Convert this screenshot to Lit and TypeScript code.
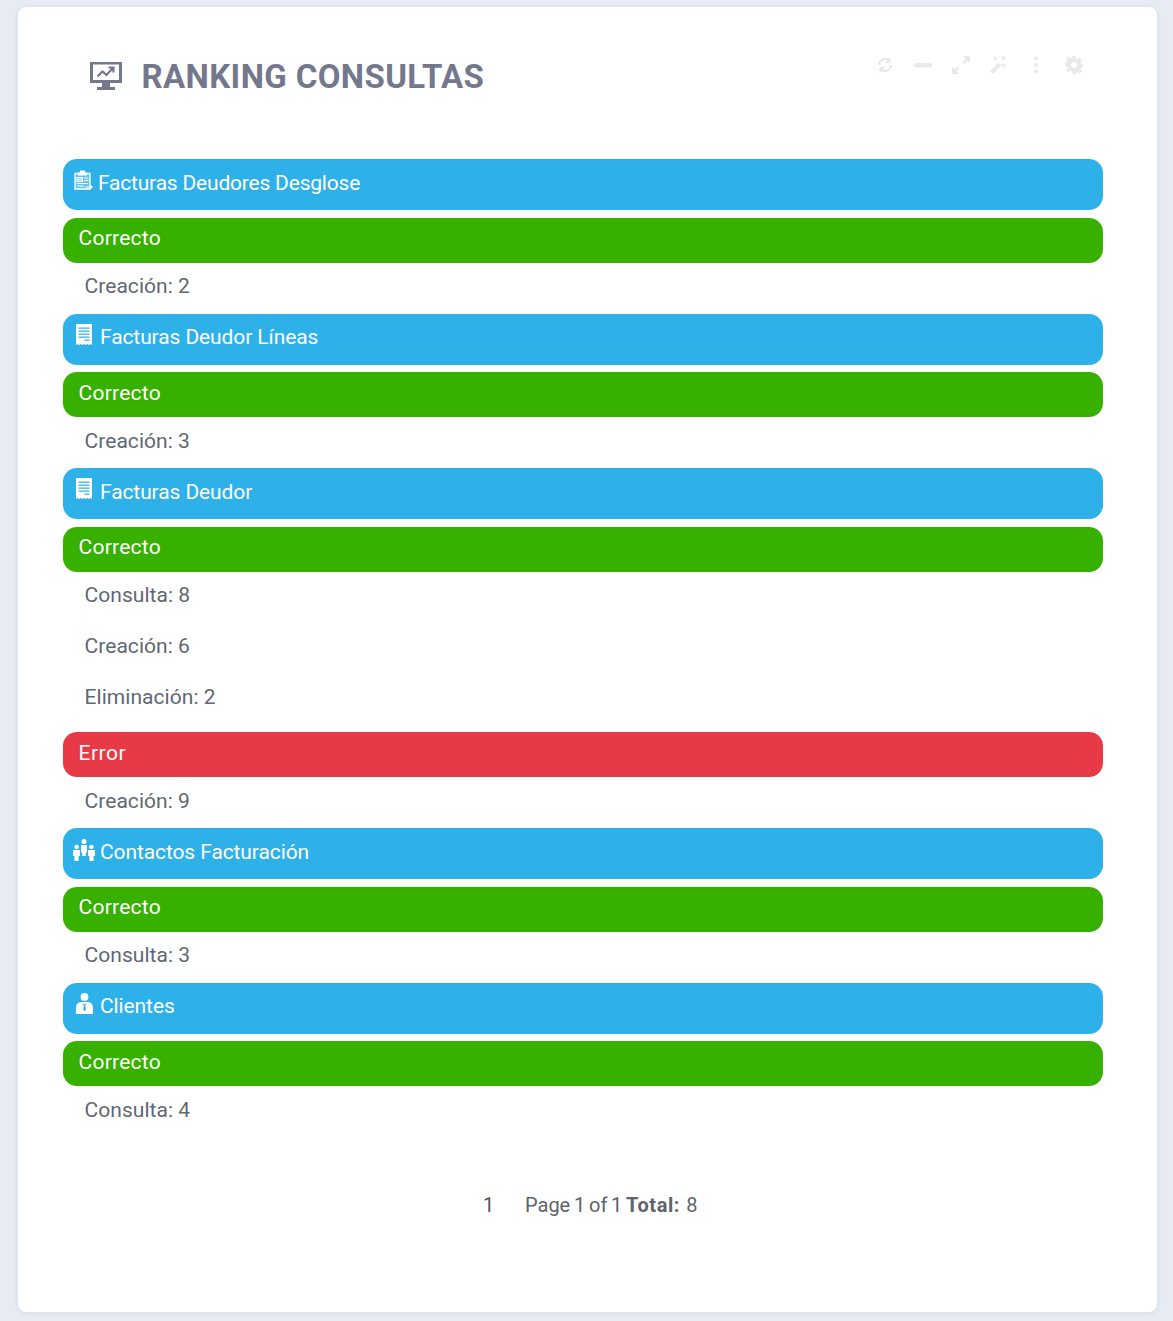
import { LitElement, html, css, svg } from "lit";
import { customElement } from "lit/decorators.js";

type Status = { kind: "ok" | "err"; items: string[] };
type Group = { icon: string; title: string; statuses: Status[]; cls?: string };

const g: Group[] = [
  { icon: "clip", title: "Facturas Deudores Desglose", cls: "t-a", statuses: [{ kind: "ok", items: ["Creación: 2"] }] },
  { icon: "bill", title: "Facturas Deudor Líneas", statuses: [{ kind: "ok", items: ["Creación: 3"] }] },
  { icon: "bill", title: "Facturas Deudor", statuses: [
    { kind: "ok", items: ["Consulta: 8", "Creación: 6", "Eliminación: 2"] },
    { kind: "err", items: ["Creación: 9"] },
  ] },
  { icon: "team", title: "Contactos Facturación", statuses: [{ kind: "ok", items: ["Consulta: 3"] }] },
  { icon: "user", title: "Clientes", statuses: [{ kind: "ok", items: ["Consulta: 4"] }] },
];

const icons: Record<string, unknown> = {
  clip: svg`<svg class="ic i-clip" width="19" height="20" viewBox="0 0 19 20" fill="none" stroke="#fff">
    <path d="M1 3.5h15V19H1z" fill="rgba(255,255,255,.25)" stroke-width="1.3"/>
    <path d="M6 .5h5v2h2v3H4v-3h2z" fill="#fff" stroke="none"/>
    <rect x="3" y="7.500" width="5.500" height="4" fill="rgba(255,255,255,.5)" stroke-width="1"/>
    <path d="M10 8h4.500M10 10.500h4.500M3 13.500h11M3 16h7M11 17h7M16 15l2.200 2-2.200 2" stroke-width="1.1"/>
  </svg>`,
  bill: svg`<svg class="ic i-bill" width="16" height="22" viewBox="0 0 16 22">
    <path fill="#fff" fill-rule="evenodd" d="M0 0h16v21l-1.600-1-1.600 1-1.600-1-1.600 1-1.600-1-1.600 1-1.600-1-1.600 1-1.600-1L0 21zM2.500 3.500v1.300h11V3.500zm0 3v1.300h11V6.500zm0 3v1.300h11V9.500zm0 3v1.300h11v-1.300zm6 3v1.300h5v-1.300z"/>
  </svg>`,
  team: svg`<svg class="ic i-team" width="22" height="22" viewBox="0 0 22 22" fill="#fff">
    <circle cx="11" cy="2.600" r="2.500"/><path d="M8 6h6v7.500h-1.200V17H9.200v-3.500H8z"/>
    <circle cx="3.600" cy="8" r="2.300"/><path d="M0 11h7v6H5.600v5H1.400v-5H0z"/>
    <circle cx="18.400" cy="8" r="2.300"/><path d="M15 11h7v6h-1.400v5h-4.200v-5H15z"/>
  </svg>`,
  user: svg`<svg class="ic i-user" width="17" height="21" viewBox="0 0 17 21" fill="#fff">
    <circle cx="8.500" cy="3.900" r="3.900"/>
    <path fill-rule="evenodd" d="M0 21v-6.500C0 11 2.500 9 5.500 9h6c3 0 5.500 2 5.500 5.500V21zM6 10l2 2.800-.9 3.700 1.400 1.800 1.400-1.800L9 12.800 11 10l-2.500 1.500z"/>
  </svg>`,
};

@customElement("app-root")
export class AppRoot extends LitElement {
  static styles = css`
    :host { display: block; min-height: 1321px; box-sizing: border-box; background: #e7ebf3; padding: 7px 16px 9px 18px; font-family: "Roboto", "Liberation Sans", sans-serif; }
    .card { background: #fff; border-radius: 8px; height: 1305px; box-sizing: border-box; padding: 0 54px 0 45px; box-shadow: 0 1px 4px rgba(150,160,180,.25); display: flex; flex-direction: column; }
    .head { height: 152px; flex: none; display: flex; align-items: flex-start; justify-content: space-between; }
    .title { display: flex; align-items: flex-start; gap: 19.5px; margin: 52px 0 0 27px; color: #74788d; font-size: 33px; line-height: 34px; font-weight: 700; letter-spacing: .38px; }
    .title svg { margin-top: 3px; flex: none; }
    .title span { margin-top: 1px; }
    .tools { display: flex; gap: 19.8px; margin: 49px 20px 0 0; }
    .tools svg { display: block; }
    .bar { color: #fff; font-size: 21px; border-radius: 14px; box-sizing: border-box; position: relative; line-height: 24px; }
    .blue { background: #2eb0e9; height: 51.1px; padding: 11.6px 0 0 37px; letter-spacing: -.1px; }
    .t-a { padding-left: 35px; letter-spacing: -.2px; }
    .green, .red { height: 45px; margin-top: 7.5px; padding: 8.4px 0 0 15.5px; letter-spacing: .25px; }
    .red { letter-spacing: .5px; }
    .green { background: #38b000; }
    .red { background: #e83947; }
    .ic { position: absolute; }
    .i-clip { left: 11px; top: 11px; }
    .i-bill { left: 13px; top: 10px; }
    .i-team { left: 10px; top: 11px; }
    .i-user { left: 13px; top: 10px; }
    .item { height: 51px; box-sizing: border-box; padding: 11.4px 0 0 21.5px; color: #5f6875; font-size: 21px; line-height: 24px; letter-spacing: .05px; }
    .pager { margin-top: 56px; display: flex; font-size: 20px; line-height: 24px; color: #5f636c; padding-left: 420px; }
    .pager .num { width: 42px; color: #4f5561; }
    .pager .txt { word-spacing: -1.2px; }
    b { font-weight: 700; letter-spacing: .6px; margin-right: 2.5px; }
  `;

  private tools() {
    const c = "#e9e9ec";
    return html`
      <svg width="18" height="18" viewBox="0 0 18 18" fill="none" stroke=${c} stroke-width="2.3"><path d="M3 9a6 6 0 0 1 9.500-4.800M15 9a6 6 0 0 1-9.500 4.800"/><path fill=${c} stroke="none" d="M14.500 1v6h-6zM3.500 17v-6h6z"/></svg>
      <svg width="18" height="18" viewBox="0 0 18 18"><rect y="7" width="18" height="4.500" rx="2" fill=${c}/></svg>
      <svg width="18" height="18" viewBox="0 0 18 18" fill=${c}><path d="M11 0h7v7l-2.300-2.300-3.300 3.300-2-2 3.300-3.300zM7 18H0v-7l2.300 2.300 3.300-3.300 2 2-3.300 3.300z"/></svg>
      <svg width="18" height="18" viewBox="0 0 18 18" fill="none" stroke=${c}><path stroke-width="4.500" d="M2.500 16.500L11 8"/><path stroke-width="1.500" d="M5 1l3 3M8 1L5 4M13 .5l3 3M16 .5l-3 3M13 8l3 3M16 8l-3 3"/></svg>
      <svg width="18" height="18" viewBox="0 0 18 18" fill=${c}><circle cx="9" cy="2.500" r="2"/><circle cx="9" cy="9" r="2"/><circle cx="9" cy="15.500" r="2"/></svg>
      <svg width="18" height="18" viewBox="0 0 18 18"><path fill=${c} fill-rule="evenodd" d="M7.500 0h3l.5 2.500 1.700.7 2.100-1.400 2.100 2.100-1.400 2.100.7 1.700 2.500.5v3l-2.500.5-.7 1.700 1.400 2.100-2.100 2.100-2.100-1.400-1.700.7-.5 2.500h-3L7 15.500l-1.700-.7-2.100 1.400-2.100-2.100 1.400-2.100-.7-1.700L-.7 10V7l2.500-.5.700-1.700-1.400-2.100 2.100-2.100 2.100 1.400L7 2zM9 6a3 3 0 1 0 0 6 3 3 0 0 0 0-6z"/></svg>
    `;
  }

  render() {
    return html`<div class="card">
      <div class="head">
        <div class="title">
          <svg width="32" height="28" viewBox="0 0 32 28" fill="#74788d">
            <path fill-rule="evenodd" d="M0 0h32v21H20v4h5v3H7v-3h5v-4H0zm3 2.500v15.500h26V2.500z"/>
            <path fill="none" stroke="#74788d" stroke-width="2.200" d="M7.500 14.500l5-5 4 3.500 6-6.500M18.500 5.500h5v5"/>
          </svg>
          <span>RANKING CONSULTAS</span>
        </div>
        <div class="tools">${this.tools()}</div>
      </div>
      ${g.map((x) => html`
        <div class="bar blue ${x.cls ?? ""}">${icons[x.icon]}${x.title}</div>
        ${x.statuses.map((s) => html`
          <div class="bar ${s.kind === "ok" ? "green" : "red"}">${s.kind === "ok" ? "Correcto" : "Error"}</div>
          ${s.items.map((i) => html`<div class="item">${i}</div>`)}
        `)}
      `)}
      <div class="pager"><span class="num">1</span><span class="txt">Page 1 of 1 <b>Total:</b> 8</span></div>
    </div>`;
  }
}
